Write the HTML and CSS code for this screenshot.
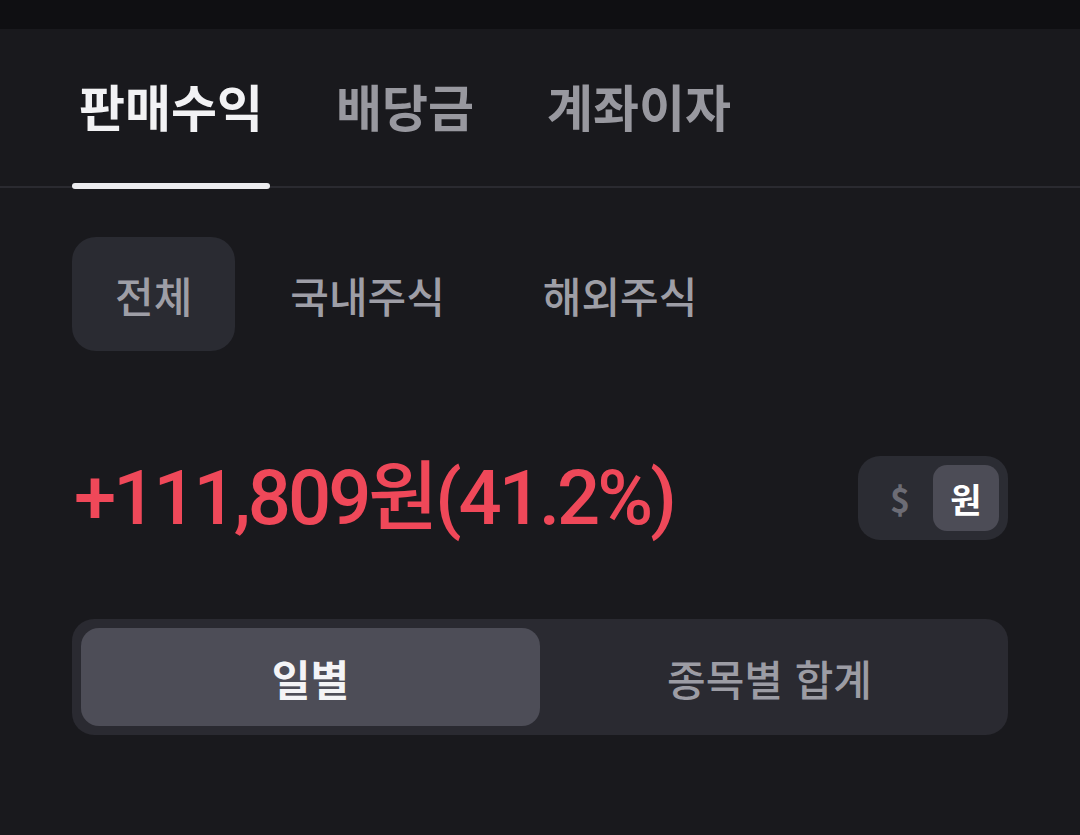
FILE: index.html
```html
<!DOCTYPE html>
<html lang="ko">
<head>
    <meta charset="UTF-8">
    <meta name="viewport" content="width=device-width, initial-scale=1.0">
    <title>판매수익</title>
    <link rel="stylesheet" href="styles.css">
</head>
<body>
    <div class="status-bar"></div>

    <nav class="tabs">
        <div class="tab active">판매수익</div>
        <div class="tab">배당금</div>
        <div class="tab">계좌이자</div>
    </nav>

    <div class="content">
        <div class="chips">
            <button type="button" class="chip selected">전체</button>
            <button type="button" class="chip">국내주식</button>
            <button type="button" class="chip">해외주식</button>
        </div>

        <div class="summary">
            <div class="amount">+111,809원(41.2%)</div>
            <div class="currency-toggle">
                <span class="currency">$</span>
                <span class="currency on">원</span>
            </div>
        </div>

        <div class="segmented">
            <button type="button" class="segment on">일별</button>
            <button type="button" class="segment">종목별 합계</button>
        </div>
    </div>
</body>
</html>
```

FILE: styles.css
```css
body {
    margin: 0;
    padding: 0;
    background-color: #19191d;
    font-family: "Noto Sans CJK KR", "Noto Sans", sans-serif;
    color: #a0a0a8;
}

.status-bar {
    height: 29px;
    background-color: #0f0f12;
}

.tabs {
    display: flex;
    gap: 59px;
    padding: 0 72px 6px;
    height: 151px;
    border-bottom: 2px solid #2a2a30;
}

.tab {
    position: relative;
    display: flex;
    align-items: center;
    padding: 0 7px;
    font-size: 50px;
    font-weight: 700;
    color: #98989f;
}

.tab.active {
    color: #f2f2f4;
}

.tab.active::after {
    content: "";
    position: absolute;
    left: 0;
    right: 0;
    bottom: -9px;
    height: 6px;
    border-radius: 3px;
    background-color: #ececef;
}

.content {
    padding: 0 72px;
}

.chips {
    display: flex;
    gap: 12px;
    margin-top: 49px;
}

.chip {
    height: 114px;
    padding: 0 43px;
    border: none;
    border-radius: 24px;
    background: none;
    font-family: inherit;
    font-size: 42px;
    font-weight: 500;
    color: #9e9ea6;
}

.chip.selected {
    background-color: #2a2b32;
}

.summary {
    display: flex;
    align-items: center;
    justify-content: space-between;
    height: 84px;
    margin-top: 105px;
}

.amount {
    font-family: Roboto, "Noto Sans CJK KR", sans-serif;
    font-size: 76px;
    line-height: 84px;
    font-weight: 500;
    letter-spacing: -3px;
    color: #ef4859;
    padding-left: 2px;
}

.currency-toggle {
    display: flex;
    padding: 9px;
    border-radius: 22px;
    background-color: #2b2c33;
}

.currency {
    width: 66px;
    height: 66px;
    display: flex;
    align-items: center;
    justify-content: center;
    border-radius: 14px;
    font-size: 34px;
    font-weight: 700;
    color: #6c6c75;
}

.currency.on {
    background-color: #4c4c56;
    color: #ffffff;
}

.segmented {
    display: grid;
    grid-template-columns: 1fr 1fr;
    padding: 9px;
    margin-top: 79px;
    border-radius: 22px;
    background-color: #2a2a31;
}

.segment {
    height: 98px;
    border: none;
    border-radius: 18px;
    background: none;
    font-family: inherit;
    font-size: 42px;
    font-weight: 500;
    color: #9c9ca4;
}

.segment.on {
    background-color: #4d4d57;
    color: #f4f4f6;
    font-weight: 700;
}
```
